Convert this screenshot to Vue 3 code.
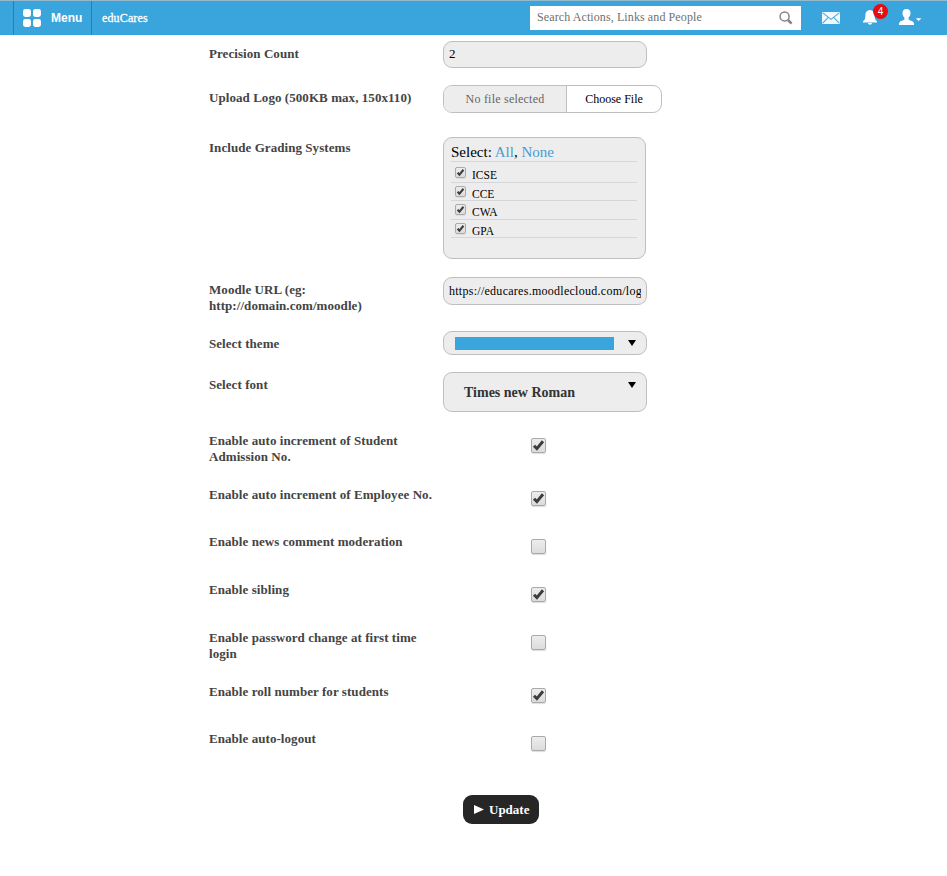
<script setup>
import { reactive, ref } from 'vue'

const systems = reactive([
  { name: 'ICSE', on: true },
  { name: 'CCE', on: true },
  { name: 'CWA', on: true },
  { name: 'GPA', on: true },
])
const setAll = (value) => systems.forEach((s) => (s.on = value))

const toggles = reactive([
  { label: 'Enable auto increment of Student Admission No.', on: true, size: 'tall' },
  { label: 'Enable auto increment of Employee No.', on: true, size: 'short raised' },
  { label: 'Enable news comment moderation', on: false, size: '' },
  { label: 'Enable sibling', on: true, size: '' },
  { label: 'Enable password change at first time login', on: false, size: 'tall' },
  { label: 'Enable roll number for students', on: true, size: 'short raised' },
  { label: 'Enable auto-logout', on: false, size: '' },
])

const precision = ref('2')
const moodleUrl = ref('https://educares.moodlecloud.com/login')
</script>

<template>
  <div class="page">
    <header class="bar">
      <a class="menu">
        <svg width="18" height="18" viewBox="0 0 18 18" fill="#fff">
          <rect width="8" height="8" rx="2.4" />
          <rect x="10" width="8" height="8" rx="2.4" />
          <rect y="10" width="8" height="8" rx="2.4" />
          <rect x="10" y="10" width="8" height="8" rx="2.4" />
        </svg>
        <span class="menu-text">Menu</span>
      </a>
      <span class="brand">eduCares</span>
      <div class="search">
        <span class="search-text">Search Actions, Links and People</span>
        <svg width="14" height="14" viewBox="0 0 14 14" fill="none" stroke="#858585">
          <circle cx="5.6" cy="5.4" r="4.5" stroke-width="1.5" />
          <path d="M9 9l3.600 3.600" stroke-width="2.6" />
        </svg>
      </div>
      <svg class="mail" width="18" height="12" viewBox="0 0 18 12">
        <path d="M0 0h18v12H0z" fill="#eefaff" />
        <path d="M.5.6L9 7.400 17.500.6M.5 11.400l5.800-6M17.500 11.400l-5.800-6" fill="none" stroke="#55a9d4" stroke-width="1.1" />
      </svg>
      <div class="bell">
        <svg width="14" height="15" viewBox="0 0 14 15" fill="#fff">
          <path d="M7 0C4 0 2.500 2.200 2.400 5C2.300 8.300 1.900 10 0 11.300V12.400H14V11.300C12.100 10 11.700 8.300 11.600 5C11.500 2.200 10 0 7 0ZM5 13h4c-.2 1.100-.9 1.700-2 1.700S5.200 14.100 5 13Z" />
        </svg>
        <span class="badge">4</span>
      </div>
      <svg class="user" width="23" height="16" viewBox="0 0 23 16" fill="#fff">
        <path d="M7.500 0C4.700 0 3.400 1.700 3.500 4.200C3.600 6.300 4.300 7.600 5.400 8.600V10.600C4.800 11.700 0 11.700 0 15V16H15V15C15 11.700 10.200 11.700 9.600 10.600V8.600C10.700 7.600 11.400 6.300 11.500 4.200C11.600 1.700 10.300 0 7.500 0Z" />
        <path d="M16.800 9.200h5.600l-2.800 2.900z" />
      </svg>
    </header>

    <main class="form">
      <div class="row r-precision">
        <label>Precision Count</label>
        <input v-model="precision" class="field first" type="text" />
      </div>
      <div class="row r-logo">
        <label>Upload Logo (500KB max, 150x110)</label>
        <div class="file">
          <span class="file-name">No file selected</span>
          <span class="file-pick">Choose File</span>
        </div>
      </div>
      <div class="row r-systems">
        <label>Include Grading Systems</label>
        <div class="systems">
          <div class="select-line">Select: <a @click="setAll(true)">All</a>, <a @click="setAll(false)">None</a></div>
          <div v-for="s in systems" :key="s.name" class="system" @click="s.on = !s.on">
            <span class="check small">
              <svg v-if="s.on" viewBox="0 0 13 13"><path d="M2.300 6.800L5 9.600L10.800 2.500" /></svg>
            </span>
            <span class="system-name">{{ s.name }}</span>
          </div>
        </div>
      </div>
      <div class="row r-moodle">
        <label>Moodle URL (eg: http://domain.com/moodle)</label>
        <input v-model="moodleUrl" class="field url" type="text" />
      </div>
      <div class="row r-theme">
        <label>Select theme</label>
        <div class="theme">
          <span class="swatch"></span>
          <span class="arrow"></span>
        </div>
      </div>
      <div class="row r-font">
        <label>Select font</label>
        <div class="font-pick">
          <span class="font-name">Times new Roman</span>
          <span class="arrow"></span>
        </div>
      </div>
      <div v-for="t in toggles" :key="t.label" class="row toggle" :class="t.size">
        <label>{{ t.label }}</label>
        <span class="check" @click="t.on = !t.on">
          <svg v-if="t.on" viewBox="0 0 13 13"><path d="M2 6.700L4.900 9.600L11 2.300" /></svg>
        </span>
      </div>
      <button class="update">
        <svg width="10" height="9" viewBox="0 0 10 9"><path d="M0 0l10 4.500L0 9z" fill="#fff" /></svg>
        <span>Update</span>
      </button>
    </main>
  </div>
</template>

<style>
body {
  margin: 0;
  background: #fff;
}
</style>

<style scoped>
.page {
  height: 876px;
  overflow: hidden;
  font-family: "Liberation Serif", "Times New Roman", serif;
}
.bar {
  display: flex;
  align-items: flex-start;
  box-sizing: border-box;
  height: 35px;
  padding-left: 13px;
  border-top: 1px solid #93b9cb;
  background: #3aa4dd;
}
.menu {
  display: flex;
  box-sizing: border-box;
  width: 79px;
  height: 34px;
  padding: 8px 0 0 9px;
  border-left: 1px solid #2a7eae;
  border-right: 1px solid #2a7eae;
}
.menu-text {
  margin-left: 10px;
  font: bold 12px/18px "Liberation Sans", Arial, sans-serif;
  color: #fff;
}
.brand {
  width: 428px;
  margin-left: 10px;
  font-size: 12px;
  line-height: 34px;
  letter-spacing: 0.14px;
  color: #fff;
  -webkit-text-stroke: 0.3px #fff;
}
.search {
  display: flex;
  align-items: center;
  justify-content: space-between;
  box-sizing: border-box;
  width: 271px;
  height: 24px;
  margin-top: 5px;
  padding: 0 8px 0 7px;
  background: #fff;
}
.search-text {
  font-size: 12px;
  line-height: 22px;
  padding-bottom: 2px;
  letter-spacing: 0.1px;
  color: #707070;
}
.mail {
  margin: 11px 0 0 21px;
}
.bell {
  position: relative;
  width: 14px;
  margin: 9px 0 0 23px;
}
.bell svg {
  display: block;
}
.badge {
  position: absolute;
  top: -6px;
  left: 10px;
  width: 15px;
  height: 15px;
  border-radius: 50%;
  background: #e60d12;
  font: 10px/15px "Liberation Sans", Arial, sans-serif;
  text-align: center;
  color: #fff;
}
.user {
  margin: 8px 0 0 22px;
}
.form {
  padding: 6px 0 0 209px;
}
.row {
  display: grid;
  grid-template-columns: 234px 220px;
  align-items: start;
}
.row label {
  max-width: 226px;
  padding-top: 5px;
  font-size: 13px;
  font-weight: bold;
  line-height: 16px;
  letter-spacing: 0.06px;
  color: #444;
}
.r-precision { height: 44px; }
.r-logo { height: 52px; }
.r-systems { height: 140px; }
.r-systems label { padding-top: 3px; }
.r-moodle { height: 54px; }
.r-moodle label { max-width: 160px; }
.r-theme { height: 41px; }
.r-font { height: 61px; }
.field {
  box-sizing: border-box;
  width: 204px;
  height: 28px;
  margin: 0;
  padding: 0 5px;
  border: 1px solid #bfbfbf;
  border-radius: 9px;
  outline: none;
  background: #ededed;
  font-family: inherit;
  font-size: 12px;
  color: #000;
}
.first {
  height: 27px;
  padding-bottom: 2px;
  font-size: 13px;
}
.url {
  letter-spacing: 0.27px;
}
.file {
  display: flex;
  box-sizing: border-box;
  width: 219px;
  height: 28px;
  border: 1px solid #bfbfbf;
  border-radius: 9px;
  overflow: hidden;
  font-size: 12px;
  line-height: 26px;
  text-align: center;
}
.file-name {
  width: 122px;
  border-right: 1px solid #bfbfbf;
  background: #ededed;
  letter-spacing: 0.22px;
  color: #666;
}
.file-pick {
  flex: 1;
  color: #000;
}
.systems {
  box-sizing: border-box;
  width: 203px;
  height: 122px;
  padding: 5px 8px 0 7px;
  border: 1px solid #bfbfbf;
  border-radius: 9px;
  background: #ededed;
}
.select-line {
  height: 18px;
  border-bottom: 1px solid #d6d6d6;
  font-size: 15px;
  line-height: 18px;
  color: #000;
}
.select-line a {
  color: #4a9cd3;
}
.system {
  display: flex;
  box-sizing: border-box;
  height: 18.4px;
  padding-left: 4px;
  border-bottom: 1px solid #d6d6d6;
}
.system:nth-child(2) {
  height: 21px;
  padding-top: 2px;
}
.system-name {
  margin-left: 6px;
  font-size: 11.5px;
  line-height: 22px;
  color: #000;
}
.check {
  display: block;
  box-sizing: border-box;
  width: 15px;
  height: 15px;
  border: 1px solid #aaa;
  border-radius: 2px;
  background: linear-gradient(#ededed, #dcdcdc);
  box-shadow: 0 1px 1px #ddd;
}
.check svg {
  display: block;
  width: 100%;
  height: 100%;
}
.check path {
  fill: none;
  stroke: #3d3d3d;
  stroke-width: 3;
}
.check.small {
  width: 11px;
  height: 11px;
  margin-top: 3px;
}
.theme,
.font-pick {
  display: flex;
  box-sizing: border-box;
  width: 204px;
  border: 1px solid #bfbfbf;
  border-radius: 9px;
  background: #ededed;
}
.theme {
  height: 24px;
  padding: 5px 0 0 11px;
}
.swatch {
  width: 159px;
  height: 13px;
  background: #3aa4dd;
}
.arrow {
  width: 0;
  height: 0;
  border: 4px solid transparent;
  border-top: 6px solid #000;
  border-bottom: 0;
}
.theme .arrow {
  margin: 3px 0 0 14px;
}
.font-pick {
  height: 40px;
  padding-left: 20px;
}
.font-name {
  width: 164px;
  font-size: 14px;
  font-weight: bold;
  line-height: 40px;
  color: #333;
}
.font-pick .arrow {
  margin-top: 9px;
}
.toggle {
  height: 48px;
}
.toggle.short {
  height: 47px;
}
.toggle.tall {
  height: 54px;
}
.toggle label {
  padding-top: 0;
}
.toggle .check {
  margin: 5px 0 0 88px;
}
.toggle.raised .check {
  margin-top: 4px;
}
.update {
  display: flex;
  align-items: center;
  box-sizing: border-box;
  width: 76px;
  height: 29px;
  margin: 16px 0 0 254px;
  padding: 0 0 0 11px;
  border: 0;
  border-radius: 9px;
  background: #262626;
  font-family: inherit;
  font-size: 13px;
  font-weight: bold;
  color: #fff;
}
.update span {
  margin-left: 5px;
}
</style>
